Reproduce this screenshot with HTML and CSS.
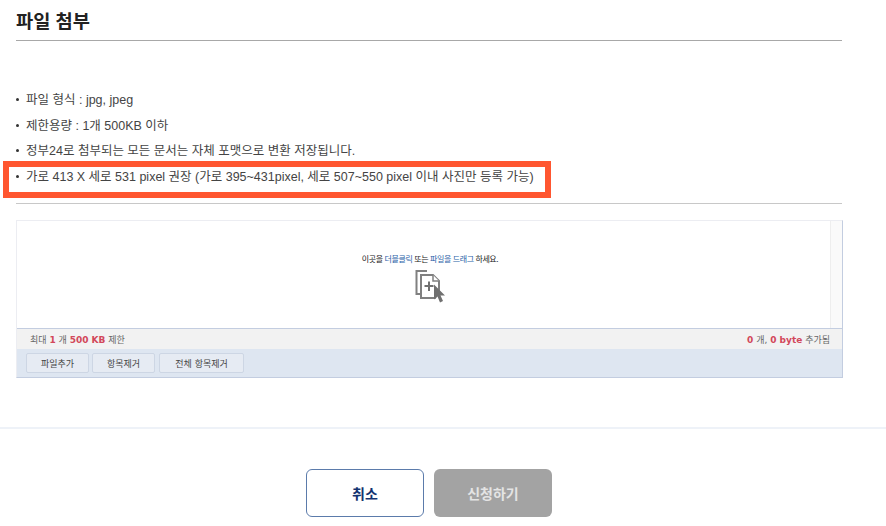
FILE: index.html
```html
<!DOCTYPE html>
<html lang="ko">
<head>
    <meta charset="UTF-8">
    <meta name="viewport" content="width=device-width, initial-scale=1.0">
    <title>파일 첨부</title>
    <link rel="stylesheet" href="styles.css">
</head>
<body>
<div class="section">
    <h2 class="section-title">파일 첨부</h2>
    <ul class="notes">
        <li>파일 형식 : jpg, jpeg</li>
        <li>제한용량 : 1개 500KB 이하</li>
        <li>정부24로 첨부되는 모든 문서는 자체 포맷으로 변환 저장됩니다.</li>
        <li class="marked">가로 413 X 세로 531 pixel 권장 (가로 395~431pixel, 세로 507~550 pixel 이내 사진만 등록 가능)</li>
    </ul>

    <div class="uploader">
        <div class="drop-area">
            <div class="drop-main">
                <p class="drop-text">이곳을 <span class="link">더블클릭</span> 또는 <span class="link">파일을 드래그</span> 하세요.</p>
                <svg class="drop-icon" width="32" height="34" viewBox="0 0 32 34">
                    <path d="M13 2H2.500V25H6" fill="none" stroke="#808080" stroke-width="2"/>
                    <path d="M7 6H19L25 12V22L21 29H7Z" fill="#fff" stroke="#808080" stroke-width="2"/>
                    <path d="M19 6V12H25" fill="#fff" stroke="#808080" stroke-width="1.500"/>
                    <path d="M15 12.500V22M10.500 17H19.500" fill="none" stroke="#707070" stroke-width="2"/>
                    <path d="M20 15.500L31 26.500H26.500L29 32L26 33.500L23.500 27.500L20 30.500Z" fill="#707070"/>
                </svg>
            </div>
            <div class="scroll-track"></div>
        </div>
        <div class="status-bar">
            <span>최대 <b>1</b> 개 <b>500 KB</b> 제한</span>
            <span><b>0</b> 개, <b>0 byte</b> 추가됨</span>
        </div>
        <div class="tool-bar">
            <button class="tool-btn">파일추가</button>
            <button class="tool-btn">항목제거</button>
            <button class="tool-btn tool-btn-wide">전체 항목제거</button>
        </div>
    </div>
</div>

<div class="actions">
    <button class="btn btn-cancel">취소</button>
    <button class="btn btn-submit">신청하기</button>
</div>
</body>
</html>
```

FILE: styles.css
```css
*, *::before, *::after {
    margin: 0;
    padding: 0;
    box-sizing: border-box;
}

body {
    font-family: "Liberation Sans", "Noto Sans CJK KR", sans-serif;
    color: #333;
    background: #fff;
    overflow: hidden;
}

.section {
    width: 842px;
    padding: 0 0 49px 16px;
}

.section-title {
    height: 41px;
    padding-top: 8px;
    font-size: 18.700px;
    line-height: 28px;
    font-weight: 700;
    color: #222;
    border-bottom: 1px solid #a8a8a8;
}

.notes {
    list-style: none;
    margin-top: 47px;
    padding-bottom: 13px;
    border-bottom: 1px solid #c8c8c8;
}

.notes li {
    position: relative;
    height: 25.600px;
    padding-left: 10px;
    font-size: 12.500px;
    line-height: 25.600px;
    color: #444;
}

.notes li::before {
    content: '';
    position: absolute;
    left: 0;
    top: 10px;
    width: 3px;
    height: 3px;
    border-radius: 50%;
    background: #333;
}

.notes .marked::after {
    content: '';
    position: absolute;
    left: -13px;
    top: -4px;
    width: 548px;
    height: 37px;
    border: 6px solid #ff5630;
}

.uploader {
    width: 827px;
    margin-top: 16px;
    border: 1px solid #c3cde0;
    border-top-color: #ecedf2;
    border-left-color: #ecedf2;
    font-family: "DejaVu Sans", "Noto Sans CJK KR", sans-serif;
}

.drop-area {
    display: flex;
    height: 108px;
    border-bottom: 1px solid #c3cde0;
}

.drop-main {
    flex: 1;
    display: flex;
    flex-direction: column;
    align-items: center;
    padding: 32px 0 0 13px;
}

.drop-text {
    font-family: "Noto Sans CJK KR", sans-serif;
    font-size: 8px;
    line-height: 12px;
    color: #222;
    letter-spacing: -0.400px;
}

.link {
    color: #2a62a8;
}

.drop-icon {
    margin-top: 4px;
}

.scroll-track {
    width: 12px;
    background: #fafafa;
    border-left: 1px solid #eee;
}

.status-bar {
    display: flex;
    justify-content: space-between;
    align-items: center;
    height: 20px;
    padding: 0 12px 0 13px;
    font-size: 9px;
    color: #666;
    background: #f2f2f2;
}

.status-bar b {
    color: #d2485a;
}

.tool-bar {
    display: flex;
    gap: 3px;
    height: 28px;
    padding: 4px 0 0 9px;
    background: #dee6f1;
}

.tool-btn {
    height: 20px;
    width: 63px;
    font-family: inherit;
    font-size: 9px;
    color: #444;
    background: #e6ebf3;
    border: 1px solid #cdd6e4;
    border-radius: 2px;
}

.tool-btn-wide {
    width: 85px;
    margin-left: 1px;
}

.actions {
    display: flex;
    justify-content: center;
    gap: 10px;
    padding: 40px 28px 9px 0;
    border-top: 2px solid #eef2f8;
}

.btn {
    width: 118px;
    height: 48px;
    font-family: "Noto Sans CJK KR", sans-serif;
    font-size: 14px;
    font-weight: 700;
    border-radius: 6px;
}

.btn-cancel {
    color: #12326f;
    background: #fff;
    border: 1px solid #5b7bab;
}

.btn-submit {
    color: #e4e4e4;
    background: #a3a3a3;
    border: 0;
}
```
